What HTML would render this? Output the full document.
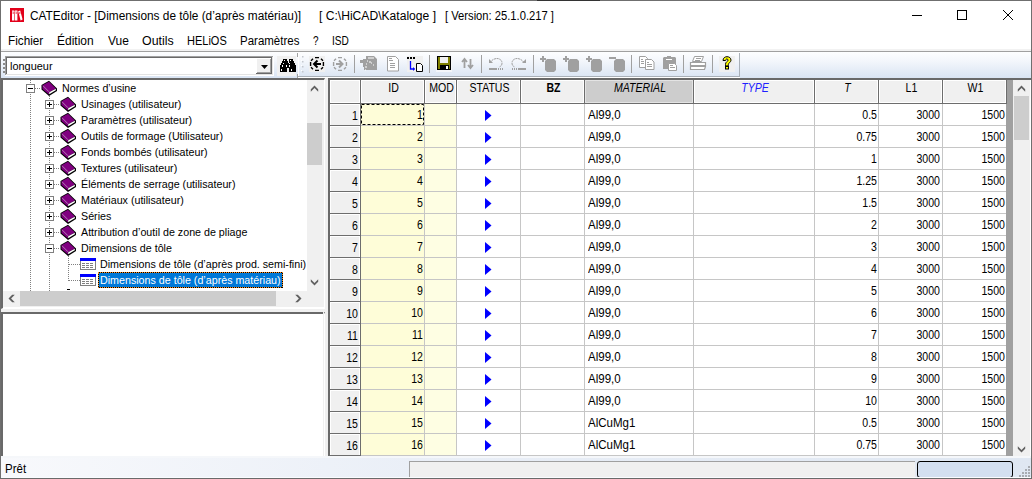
<!DOCTYPE html><html><head><meta charset='utf-8'><style>
*{margin:0;padding:0;box-sizing:border-box}
html,body{width:1032px;height:479px;overflow:hidden;background:#fff}
body{position:relative;font-family:"Liberation Sans",sans-serif;color:#000}
.ab{position:absolute}
.t{position:absolute;white-space:pre;line-height:1}
.g{font-size:12px;transform:scaleX(.88)}.gr{text-align:right;transform-origin:100% 50%}.gc{text-align:center}.gl{transform-origin:0 50%}
</style></head><body>
<div class='ab' style='left:0;top:0;width:1032px;height:479px;border:1px solid #6f6f6f;border-bottom:none'></div>
<svg class='ab' style='left:10px;top:8px' width='14' height='14'><rect width='14' height='14' fill='#e2001a'/><rect x='2' y='2.5' width='2.4' height='10' fill='#fff'/><rect x='5' y='2.5' width='2.4' height='10' fill='#fff'/><path d='M8.2 3.2L10.2 2.5L12.6 11.6L10.6 12.4Z' fill='#fff'/><rect x='2.6' y='4.4' width='1.2' height='1.2' fill='#e2001a'/><rect x='5.6' y='4.4' width='1.2' height='1.2' fill='#e2001a'/><rect x='9.2' y='4.4' width='1.2' height='1.2' fill='#e2001a'/><rect x='2' y='3.4' width='5.4' height='0.6' fill='#f7b0b8'/></svg>
<div class='t' style='left:30px;top:9.5px;font-size:12.5px;transform:scaleX(.948);transform-origin:0 0'>CATEditor - [Dimensions de tôle (d’après matériau)]</div>
<div class='t' style='left:319px;top:9.5px;font-size:12.5px;transform:scaleX(.968);transform-origin:0 0'>[ C:\HiCAD\Kataloge ]</div>
<div class='t' style='left:445px;top:9.5px;font-size:12.5px;transform:scaleX(.896);transform-origin:0 0'>[ Version: 25.1.0.217 ]</div>
<div class='ab' style='left:912px;top:15px;width:10px;height:1px;background:#000'></div>
<div class='ab' style='left:957px;top:10px;width:10px;height:10px;border:1px solid #000'></div>
<svg class='ab' style='left:1002px;top:9px' width='12' height='12'><path d='M1 1L11 11M11 1L1 11' stroke='#000' stroke-width='1'/></svg>
<div class='t' style='left:8px;top:34.5px;font-size:12.5px;transform:scaleX(0.94);transform-origin:0 0'>Fichier</div>
<div class='t' style='left:57px;top:34.5px;font-size:12.5px;transform:scaleX(0.96);transform-origin:0 0'>Édition</div>
<div class='t' style='left:107.5px;top:34.5px;font-size:12.5px;transform:scaleX(0.96);transform-origin:0 0'>Vue</div>
<div class='t' style='left:141.5px;top:34.5px;font-size:12.5px;transform:scaleX(0.99);transform-origin:0 0'>Outils</div>
<div class='t' style='left:186.5px;top:34.5px;font-size:12.5px;transform:scaleX(0.88);transform-origin:0 0'>HELiOS</div>
<div class='t' style='left:239.5px;top:34.5px;font-size:12.5px;transform:scaleX(0.92);transform-origin:0 0'>Paramètres</div>
<div class='t' style='left:312.5px;top:34.5px;font-size:12.5px;transform:scaleX(0.8);transform-origin:0 0'>?</div>
<div class='t' style='left:331.5px;top:34.5px;font-size:12.5px;transform:scaleX(0.81);transform-origin:0 0'>ISD</div>
<div class='ab' style='left:1px;top:49px;width:1030px;height:2px;background:#f2f2f2'></div>
<div class='ab' style='left:1px;top:51px;width:1030px;height:1px;background:#a0a0a0'></div>
<div class='ab' style='left:1px;top:52px;width:1030px;height:26px;background:linear-gradient(#fdfeff 0%,#f3f6fb 35%,#d9e4f3 100%)'></div>
<svg class='ab' style='left:0;top:0' width='1032' height='80'><rect x='297' y='53' width='1' height='4' fill='#a0a0a0'/><rect x='297' y='74' width='1' height='4' fill='#a0a0a0'/><rect x='298' y='76' width='441' height='1' fill='#a9b0b8'/><rect x='298' y='77' width='442' height='1' fill='#fff'/><rect x='739' y='53' width='1' height='24' fill='#a9b0b8'/><rect x='298' y='53' width='1' height='23' fill='#fff'/><rect x='302' y='56' width='1.5' height='1.5' fill='#c4c8ce'/><rect x='301' y='55' width='1' height='1' fill='#fff'/><rect x='302' y='61' width='1.5' height='1.5' fill='#c4c8ce'/><rect x='301' y='60' width='1' height='1' fill='#fff'/><rect x='302' y='66' width='1.5' height='1.5' fill='#c4c8ce'/><rect x='301' y='65' width='1' height='1' fill='#fff'/><rect x='302' y='71' width='1.5' height='1.5' fill='#c4c8ce'/><rect x='301' y='70' width='1' height='1' fill='#fff'/><rect x='3' y='59' width='2' height='2' fill='#8a8a8a'/><rect x='3' y='63' width='2' height='2' fill='#8a8a8a'/><rect x='3' y='67' width='2' height='2' fill='#8a8a8a'/><rect x='3' y='71' width='2' height='2' fill='#8a8a8a'/><rect x='5' y='56' width='269' height='20' fill='#fff'/><rect x='5' y='56' width='268' height='1' fill='#a0a0a0'/><rect x='5' y='56' width='1' height='19' fill='#a0a0a0'/><rect x='6' y='57' width='266' height='1' fill='#696969'/><rect x='6' y='57' width='1' height='17' fill='#696969'/><rect x='5' y='75' width='269' height='1' fill='#fff'/><rect x='273' y='56' width='1' height='20' fill='#fff'/><rect x='6' y='74' width='267' height='1' fill='#e3e3e3'/><rect x='272' y='57' width='1' height='18' fill='#e3e3e3'/><rect x='256' y='58' width='16' height='16' fill='#f0f0f0'/><rect x='256' y='73' width='16' height='1' fill='#696969'/><rect x='271' y='58' width='1' height='16' fill='#696969'/><rect x='257' y='72' width='14' height='1' fill='#a0a0a0'/><rect x='270' y='59' width='1' height='14' fill='#a0a0a0'/><rect x='256' y='58' width='15' height='1' fill='#fff'/><rect x='256' y='58' width='1' height='15' fill='#fff'/><path d='M261 65h7l-3.5 4z' fill='#000'/><rect x='277' y='56' width='19' height='20' fill='#f0f0f0'/><path d='M283 59h4v2h1v2h1v-4h4v2h1v2h1v2h1v7h-7v-4h-2v4h-7v-7h1v-2h1v-2h1z' fill='#000'/><rect x='284' y='60' width='1' height='1' fill='#fff'/><rect x='290' y='60' width='1' height='1' fill='#fff'/><rect x='283' y='63' width='1' height='1' fill='#fff'/><rect x='289' y='63' width='1' height='1' fill='#fff'/><rect x='282' y='65' width='1' height='2' fill='#fff'/><rect x='286' y='65' width='1' height='2' fill='#fff'/><rect x='289' y='65' width='1' height='2' fill='#fff'/><rect x='281' y='69' width='1' height='2' fill='#fff'/><rect x='291' y='69' width='1' height='2' fill='#fff'/><rect x='309' y='56' width='16' height='16' fill='#f0f0f0'/><path d='M315 57.6h4M315 70.4h4M310.6 62v4M323.4 62v4M311 60.8l2-2M321 58.8l2 2M311 67.2l2 2M321 69.2l2-2' fill='none' stroke='#000' stroke-width='1.4'/><path d='M314 64h7M317.5 60.5L314 64L317.5 67.5' fill='none' stroke='#000' stroke-width='2'/><path d='M338 57.6h4M338 70.4h4M333.6 62v4M346.4 62v4M334 60.8l2-2M344 58.8l2 2M334 67.2l2 2M344 69.2l2-2' fill='none' stroke='#a0a0a0' stroke-width='1.4'/><path d='M336 64h6.5M339 60.5L342.5 64L339 67.5' fill='none' stroke='#a0a0a0' stroke-width='2'/><rect x='354' y='55' width='1' height='18' fill='#a0a0a0'/><rect x='429' y='55' width='1' height='18' fill='#a0a0a0'/><rect x='481' y='55' width='1' height='18' fill='#a0a0a0'/><rect x='533' y='55' width='1' height='18' fill='#a0a0a0'/><rect x='631' y='55' width='1' height='18' fill='#a0a0a0'/><rect x='683' y='55' width='1' height='18' fill='#a0a0a0'/><rect x='712' y='55' width='1' height='18' fill='#a0a0a0'/><path d='M366 56h8l3 3v11h-13v-3h-1v-4h-3v-3h3v-1h3z' fill='#a0a0a0'/><path d='M368 58h6M367 61h1M369 62h2M371 63h1M366 64h1M373 65h1M365 67h2M365 70h1' stroke='#fff' stroke-width='1'/><path d='M387.5 56.5h8l3 3v11.5h-11z' fill='#fff' stroke='#a0a0a0' stroke-width='1'/><path d='M389 58.5h3M389 60.5h4M390 63.5h5M390 65.5h5M390 67.5h5' stroke='#a0a0a0' stroke-width='1'/><rect x='407' y='56' width='16' height='16' fill='#f0f0f0'/><rect x='407' y='57' width='2' height='2' fill='#000'/><rect x='410' y='57' width='2' height='2' fill='#000'/><rect x='413' y='57' width='2' height='2' fill='#000'/><path d='M410.5 61v8h4' fill='none' stroke='#0000ff' stroke-width='1.3'/><path d='M413 67l2 2l-2 2z' fill='#0000ff'/><path d='M416.5 63.5h4l2 2v6h-6z' fill='#fff' stroke='#000' stroke-width='1'/><rect x='436' y='56' width='16' height='16' fill='#f4f6f9'/><rect x='437' y='56' width='14' height='14' fill='#000'/><rect x='438' y='57' width='12' height='12' fill='#808000'/><rect x='440' y='57' width='8' height='6' fill='#f0f0f0'/><rect x='440' y='65' width='9' height='5' fill='#000'/><rect x='446' y='66' width='2' height='3' fill='#fff'/><path d='M464.5 68v-8M462 62l2.5-3l2.5 3' fill='none' stroke='#a0a0a0' stroke-width='1.8'/><path d='M470.5 59v8M468 65l2.5 3l2.5-3' fill='none' stroke='#a0a0a0' stroke-width='1.8'/><path d='M490 62.5c2-3 5-4 7-4c3 0 5 2 5 4.5c0 2-1 3.5-3 4' fill='none' stroke='#a0a0a0' stroke-width='1' stroke-dasharray='2 0.6'/><path d='M489 59v4h4z' fill='#a0a0a0'/><rect x='489' y='68' width='8' height='2' fill='#a0a0a0'/><path d='M498.5 68v2M500.5 68v2M502.5 68v2' stroke='#a0a0a0'/><path d='M524 62.5c-2-3-5-4-7-4c-3 0-5 2-5 4.5c0 2 1 3.5 3 4' fill='none' stroke='#a0a0a0' stroke-width='1' stroke-dasharray='2 0.6'/><path d='M526 59v4h-4z' fill='#a0a0a0'/><rect x='518' y='68' width='8' height='2' fill='#a0a0a0'/><path d='M512.5 68v2M514.5 68v2M516.5 68v2' stroke='#a0a0a0'/><path d='M547 59h7l2 2v9l-2 2h-7l-2-2v-9z' fill='#a0a0a0'/><rect x='540' y='58' width='6' height='2' fill='#a0a0a0'/><rect x='542' y='56' width='2' height='6' fill='#a0a0a0'/><path d='M570 59h7l2 2v9l-2 2h-7l-2-2v-9z' fill='#a0a0a0'/><rect x='563' y='58' width='6' height='2' fill='#a0a0a0'/><rect x='565' y='56' width='2' height='6' fill='#a0a0a0'/><path d='M593 59h7l2 2v9l-2 2h-7l-2-2v-9z' fill='#a0a0a0'/><rect x='586' y='58' width='6' height='2' fill='#a0a0a0'/><rect x='588' y='56' width='2' height='6' fill='#a0a0a0'/><path d='M616 59h7l2 2v9l-2 2h-7l-2-2v-9z' fill='#a0a0a0'/><rect x='609' y='57' width='7' height='2' fill='#a0a0a0'/><path d='M639.5 56.5h6l2 2v9h-8z' fill='#fff' stroke='#a0a0a0'/><path d='M645.5 59.5h6l2.5 2.5v7.5h-8.5z' fill='#fff' stroke='#a0a0a0'/><path d='M641 59.5h2M641 61.5h3M641 63.5h3M647 62.5h2M647 64.5h5M647 66.5h5' stroke='#a0a0a0'/><path d='M664 57h3v-1h4v1h4l1 1v11h-13v-11z' fill='#a0a0a0'/><rect x='666' y='59' width='6' height='1' fill='#fff'/><path d='M668.5 63.5h6l2 2v5h-8z' fill='#fff' stroke='#a0a0a0'/><path d='M670 65.5h3M670 67.5h5' stroke='#a0a0a0'/><path d='M694.5 56.5h9l-2 5h-9z' fill='#fff' stroke='#a0a0a0'/><path d='M690.5 62.5h15v4l-1 3h-14z' fill='#fff' stroke='#a0a0a0' stroke-width='1.2'/><rect x='691' y='65' width='14' height='2' fill='#a0a0a0'/><rect x='696' y='58' width='5' height='1' fill='#a0a0a0'/><rect x='695' y='60' width='5' height='1' fill='#a0a0a0'/><rect x='719' y='56' width='16' height='16' fill='#f0f0f0'/><path d='M723 60.5c0-2.5 2-3.8 4-3.8c2.2 0 4 1.3 4 3.5c0 2-2.5 2.5-2.7 4.5v1.2h-2.8v-1.5c0-2.8 2.6-3 2.6-4.2c0-.7-.5-1.2-1.2-1.2c-.8 0-1.2.6-1.2 1.5z' fill='#ffff00' stroke='#000' stroke-width='1'/><rect x='725.5' y='66.5' width='3' height='2.5' fill='#ffff00' stroke='#000' stroke-width='1'/></svg>
<div class='t' style='left:10px;top:61px;font-size:11.5px;transform:scaleX(.95);transform-origin:0 0'>longueur</div>
<div class='ab' style='left:1px;top:78px;width:324px;height:231px;background:#fff;border-top:2px solid #696969;border-left:2px solid #696969;border-right:1px solid #fff;border-bottom:1px solid #fff'></div>
<div class='ab' style='left:1px;top:309px;width:324px;height:3px;background:#f0f0f0'></div>
<div class='ab' style='left:1px;top:312px;width:324px;height:146px;background:#fff;border-top:2px solid #696969;border-left:2px solid #696969;border-right:1px solid #fff;border-bottom:1px solid #f4f4f4'></div>
<div class='ab' style='left:323px;top:312px;width:1px;height:145px;background:#f0f0f0'></div>
<div class='ab' style='left:3px;top:456px;width:321px;height:1px;background:#f0f0f0'></div>
<div class='ab' style='left:325px;top:78px;width:3px;height:380px;background:#f0f0f0'></div>
<svg class='ab' style='left:30px;top:80px' width='1' height='211'><line x1='0.5' y1='0' x2='0.5' y2='211' stroke='#808080' stroke-dasharray='1 1'/></svg>
<svg class='ab' style='left:49px;top:96px' width='1' height='195'><line x1='0.5' y1='0' x2='0.5' y2='195' stroke='#808080' stroke-dasharray='1 1'/></svg>
<svg class='ab' style='left:68px;top:256px' width='1' height='25'><line x1='0.5' y1='0' x2='0.5' y2='25' stroke='#808080' stroke-dasharray='1 1'/></svg>
<div class='ab' style='left:26px;top:84px;width:9px;height:9px;border:1px solid #808080;background:#fff'></div>
<div class='ab' style='left:28px;top:88px;width:5px;height:1px;background:#000'></div>
<svg class='ab' style='left:35px;top:88px' width='6' height='1'><line x1='0' y1='0.5' x2='6' y2='0.5' stroke='#808080' stroke-dasharray='1 1'/></svg>
<svg class='ab' style='left:41px;top:80px' width='17' height='17' viewBox='0 0 17 17'><path d='M0.5 5L8 0.8L16 8.5L16 11L8 16L0.5 9.5Z' fill='#000'/><path d='M1.5 5.3L8 1.8L14.8 8.6L8 12.3Z' fill='#800080'/><path d='M1.5 5.3L8 12.3L8 14.6L1.5 8.9Z' fill='#800080'/><path d='M8.2 12.3L14.8 8.8L14.8 10.3L8.2 14.3Z' fill='#fff'/><path d='M2 5.8L8 11.8' stroke='#e0b0e0' stroke-width='0.7'/></svg>
<div class='t' style='left:62px;top:83px;font-size:10.7px'>Normes d’usine</div>
<div class='ab' style='left:45px;top:100px;width:9px;height:9px;border:1px solid #808080;background:#fff'></div>
<div class='ab' style='left:47px;top:104px;width:5px;height:1px;background:#000'></div>
<div class='ab' style='left:49px;top:102px;width:1px;height:5px;background:#000'></div>
<svg class='ab' style='left:54px;top:104px' width='6' height='1'><line x1='0' y1='0.5' x2='6' y2='0.5' stroke='#808080' stroke-dasharray='1 1'/></svg>
<svg class='ab' style='left:60px;top:96px' width='17' height='17' viewBox='0 0 17 17'><path d='M0.5 5L8 0.8L16 8.5L16 11L8 16L0.5 9.5Z' fill='#000'/><path d='M1.5 5.3L8 1.8L14.8 8.6L8 12.3Z' fill='#800080'/><path d='M1.5 5.3L8 12.3L8 14.6L1.5 8.9Z' fill='#800080'/><path d='M8.2 12.3L14.8 8.8L14.8 10.3L8.2 14.3Z' fill='#fff'/><path d='M2 5.8L8 11.8' stroke='#e0b0e0' stroke-width='0.7'/></svg>
<div class='t' style='left:81px;top:99px;font-size:10.7px'>Usinages (utilisateur)</div>
<div class='ab' style='left:45px;top:116px;width:9px;height:9px;border:1px solid #808080;background:#fff'></div>
<div class='ab' style='left:47px;top:120px;width:5px;height:1px;background:#000'></div>
<div class='ab' style='left:49px;top:118px;width:1px;height:5px;background:#000'></div>
<svg class='ab' style='left:54px;top:120px' width='6' height='1'><line x1='0' y1='0.5' x2='6' y2='0.5' stroke='#808080' stroke-dasharray='1 1'/></svg>
<svg class='ab' style='left:60px;top:112px' width='17' height='17' viewBox='0 0 17 17'><path d='M0.5 5L8 0.8L16 8.5L16 11L8 16L0.5 9.5Z' fill='#000'/><path d='M1.5 5.3L8 1.8L14.8 8.6L8 12.3Z' fill='#800080'/><path d='M1.5 5.3L8 12.3L8 14.6L1.5 8.9Z' fill='#800080'/><path d='M8.2 12.3L14.8 8.8L14.8 10.3L8.2 14.3Z' fill='#fff'/><path d='M2 5.8L8 11.8' stroke='#e0b0e0' stroke-width='0.7'/></svg>
<div class='t' style='left:81px;top:115px;font-size:10.7px'>Paramètres (utilisateur)</div>
<div class='ab' style='left:45px;top:132px;width:9px;height:9px;border:1px solid #808080;background:#fff'></div>
<div class='ab' style='left:47px;top:136px;width:5px;height:1px;background:#000'></div>
<div class='ab' style='left:49px;top:134px;width:1px;height:5px;background:#000'></div>
<svg class='ab' style='left:54px;top:136px' width='6' height='1'><line x1='0' y1='0.5' x2='6' y2='0.5' stroke='#808080' stroke-dasharray='1 1'/></svg>
<svg class='ab' style='left:60px;top:128px' width='17' height='17' viewBox='0 0 17 17'><path d='M0.5 5L8 0.8L16 8.5L16 11L8 16L0.5 9.5Z' fill='#000'/><path d='M1.5 5.3L8 1.8L14.8 8.6L8 12.3Z' fill='#800080'/><path d='M1.5 5.3L8 12.3L8 14.6L1.5 8.9Z' fill='#800080'/><path d='M8.2 12.3L14.8 8.8L14.8 10.3L8.2 14.3Z' fill='#fff'/><path d='M2 5.8L8 11.8' stroke='#e0b0e0' stroke-width='0.7'/></svg>
<div class='t' style='left:81px;top:131px;font-size:10.7px'>Outils de formage (Utilisateur)</div>
<div class='ab' style='left:45px;top:148px;width:9px;height:9px;border:1px solid #808080;background:#fff'></div>
<div class='ab' style='left:47px;top:152px;width:5px;height:1px;background:#000'></div>
<div class='ab' style='left:49px;top:150px;width:1px;height:5px;background:#000'></div>
<svg class='ab' style='left:54px;top:152px' width='6' height='1'><line x1='0' y1='0.5' x2='6' y2='0.5' stroke='#808080' stroke-dasharray='1 1'/></svg>
<svg class='ab' style='left:60px;top:144px' width='17' height='17' viewBox='0 0 17 17'><path d='M0.5 5L8 0.8L16 8.5L16 11L8 16L0.5 9.5Z' fill='#000'/><path d='M1.5 5.3L8 1.8L14.8 8.6L8 12.3Z' fill='#800080'/><path d='M1.5 5.3L8 12.3L8 14.6L1.5 8.9Z' fill='#800080'/><path d='M8.2 12.3L14.8 8.8L14.8 10.3L8.2 14.3Z' fill='#fff'/><path d='M2 5.8L8 11.8' stroke='#e0b0e0' stroke-width='0.7'/></svg>
<div class='t' style='left:81px;top:147px;font-size:10.7px'>Fonds bombés (utilisateur)</div>
<div class='ab' style='left:45px;top:164px;width:9px;height:9px;border:1px solid #808080;background:#fff'></div>
<div class='ab' style='left:47px;top:168px;width:5px;height:1px;background:#000'></div>
<div class='ab' style='left:49px;top:166px;width:1px;height:5px;background:#000'></div>
<svg class='ab' style='left:54px;top:168px' width='6' height='1'><line x1='0' y1='0.5' x2='6' y2='0.5' stroke='#808080' stroke-dasharray='1 1'/></svg>
<svg class='ab' style='left:60px;top:160px' width='17' height='17' viewBox='0 0 17 17'><path d='M0.5 5L8 0.8L16 8.5L16 11L8 16L0.5 9.5Z' fill='#000'/><path d='M1.5 5.3L8 1.8L14.8 8.6L8 12.3Z' fill='#800080'/><path d='M1.5 5.3L8 12.3L8 14.6L1.5 8.9Z' fill='#800080'/><path d='M8.2 12.3L14.8 8.8L14.8 10.3L8.2 14.3Z' fill='#fff'/><path d='M2 5.8L8 11.8' stroke='#e0b0e0' stroke-width='0.7'/></svg>
<div class='t' style='left:81px;top:163px;font-size:10.7px'>Textures (utilisateur)</div>
<div class='ab' style='left:45px;top:180px;width:9px;height:9px;border:1px solid #808080;background:#fff'></div>
<div class='ab' style='left:47px;top:184px;width:5px;height:1px;background:#000'></div>
<div class='ab' style='left:49px;top:182px;width:1px;height:5px;background:#000'></div>
<svg class='ab' style='left:54px;top:184px' width='6' height='1'><line x1='0' y1='0.5' x2='6' y2='0.5' stroke='#808080' stroke-dasharray='1 1'/></svg>
<svg class='ab' style='left:60px;top:176px' width='17' height='17' viewBox='0 0 17 17'><path d='M0.5 5L8 0.8L16 8.5L16 11L8 16L0.5 9.5Z' fill='#000'/><path d='M1.5 5.3L8 1.8L14.8 8.6L8 12.3Z' fill='#800080'/><path d='M1.5 5.3L8 12.3L8 14.6L1.5 8.9Z' fill='#800080'/><path d='M8.2 12.3L14.8 8.8L14.8 10.3L8.2 14.3Z' fill='#fff'/><path d='M2 5.8L8 11.8' stroke='#e0b0e0' stroke-width='0.7'/></svg>
<div class='t' style='left:81px;top:179px;font-size:10.7px'>Éléments de serrage (utilisateur)</div>
<div class='ab' style='left:45px;top:196px;width:9px;height:9px;border:1px solid #808080;background:#fff'></div>
<div class='ab' style='left:47px;top:200px;width:5px;height:1px;background:#000'></div>
<div class='ab' style='left:49px;top:198px;width:1px;height:5px;background:#000'></div>
<svg class='ab' style='left:54px;top:200px' width='6' height='1'><line x1='0' y1='0.5' x2='6' y2='0.5' stroke='#808080' stroke-dasharray='1 1'/></svg>
<svg class='ab' style='left:60px;top:192px' width='17' height='17' viewBox='0 0 17 17'><path d='M0.5 5L8 0.8L16 8.5L16 11L8 16L0.5 9.5Z' fill='#000'/><path d='M1.5 5.3L8 1.8L14.8 8.6L8 12.3Z' fill='#800080'/><path d='M1.5 5.3L8 12.3L8 14.6L1.5 8.9Z' fill='#800080'/><path d='M8.2 12.3L14.8 8.8L14.8 10.3L8.2 14.3Z' fill='#fff'/><path d='M2 5.8L8 11.8' stroke='#e0b0e0' stroke-width='0.7'/></svg>
<div class='t' style='left:81px;top:195px;font-size:10.7px'>Matériaux (utilisateur)</div>
<div class='ab' style='left:45px;top:212px;width:9px;height:9px;border:1px solid #808080;background:#fff'></div>
<div class='ab' style='left:47px;top:216px;width:5px;height:1px;background:#000'></div>
<div class='ab' style='left:49px;top:214px;width:1px;height:5px;background:#000'></div>
<svg class='ab' style='left:54px;top:216px' width='6' height='1'><line x1='0' y1='0.5' x2='6' y2='0.5' stroke='#808080' stroke-dasharray='1 1'/></svg>
<svg class='ab' style='left:60px;top:208px' width='17' height='17' viewBox='0 0 17 17'><path d='M0.5 5L8 0.8L16 8.5L16 11L8 16L0.5 9.5Z' fill='#000'/><path d='M1.5 5.3L8 1.8L14.8 8.6L8 12.3Z' fill='#800080'/><path d='M1.5 5.3L8 12.3L8 14.6L1.5 8.9Z' fill='#800080'/><path d='M8.2 12.3L14.8 8.8L14.8 10.3L8.2 14.3Z' fill='#fff'/><path d='M2 5.8L8 11.8' stroke='#e0b0e0' stroke-width='0.7'/></svg>
<div class='t' style='left:81px;top:211px;font-size:10.7px'>Séries</div>
<div class='ab' style='left:45px;top:228px;width:9px;height:9px;border:1px solid #808080;background:#fff'></div>
<div class='ab' style='left:47px;top:232px;width:5px;height:1px;background:#000'></div>
<div class='ab' style='left:49px;top:230px;width:1px;height:5px;background:#000'></div>
<svg class='ab' style='left:54px;top:232px' width='6' height='1'><line x1='0' y1='0.5' x2='6' y2='0.5' stroke='#808080' stroke-dasharray='1 1'/></svg>
<svg class='ab' style='left:60px;top:224px' width='17' height='17' viewBox='0 0 17 17'><path d='M0.5 5L8 0.8L16 8.5L16 11L8 16L0.5 9.5Z' fill='#000'/><path d='M1.5 5.3L8 1.8L14.8 8.6L8 12.3Z' fill='#800080'/><path d='M1.5 5.3L8 12.3L8 14.6L1.5 8.9Z' fill='#800080'/><path d='M8.2 12.3L14.8 8.8L14.8 10.3L8.2 14.3Z' fill='#fff'/><path d='M2 5.8L8 11.8' stroke='#e0b0e0' stroke-width='0.7'/></svg>
<div class='t' style='left:81px;top:227px;font-size:10.7px'>Attribution d’outil de zone de pliage</div>
<div class='ab' style='left:45px;top:244px;width:9px;height:9px;border:1px solid #808080;background:#fff'></div>
<div class='ab' style='left:47px;top:248px;width:5px;height:1px;background:#000'></div>
<svg class='ab' style='left:54px;top:248px' width='6' height='1'><line x1='0' y1='0.5' x2='6' y2='0.5' stroke='#808080' stroke-dasharray='1 1'/></svg>
<svg class='ab' style='left:60px;top:240px' width='17' height='17' viewBox='0 0 17 17'><path d='M0.5 5L8 0.8L16 8.5L16 11L8 16L0.5 9.5Z' fill='#000'/><path d='M1.5 5.3L8 1.8L14.8 8.6L8 12.3Z' fill='#800080'/><path d='M1.5 5.3L8 12.3L8 14.6L1.5 8.9Z' fill='#800080'/><path d='M8.2 12.3L14.8 8.8L14.8 10.3L8.2 14.3Z' fill='#fff'/><path d='M2 5.8L8 11.8' stroke='#e0b0e0' stroke-width='0.7'/></svg>
<div class='t' style='left:81px;top:243px;font-size:10.7px'>Dimensions de tôle</div>
<div class='ab' style='left:67px;top:289px;width:3px;height:1px;background:#000'></div>
<svg class='ab' style='left:69px;top:264px' width='11' height='1'><line x1='0' y1='0.5' x2='11' y2='0.5' stroke='#808080' stroke-dasharray='1 1'/></svg>
<svg class='ab' style='left:80px;top:258px' width='16' height='12' viewBox='0 0 16 12'><rect x='0' y='0' width='16' height='12' fill='#808080'/><rect x='0' y='0' width='16' height='3' fill='#0000ff'/><rect x='1' y='3' width='14' height='8' fill='#fff'/><path d='M2 5.5h3M6 5.5h3M10 5.5h3M2 7.5h3M6 7.5h3M10 7.5h3M2 9.5h3M6 9.5h3M10 9.5h3' stroke='#808080' stroke-width='1'/></svg>
<div class='ab' style='left:98px;top:256px;width:209px;height:16px;overflow:hidden'><div class='t' style='left:2px;top:3px;font-size:10.7px'>Dimensions de tôle (d’après prod. semi-fini)</div></div>
<svg class='ab' style='left:69px;top:280px' width='11' height='1'><line x1='0' y1='0.5' x2='11' y2='0.5' stroke='#808080' stroke-dasharray='1 1'/></svg>
<svg class='ab' style='left:80px;top:274px' width='16' height='12' viewBox='0 0 16 12'><rect x='0' y='0' width='16' height='12' fill='#808080'/><rect x='0' y='0' width='16' height='3' fill='#0000ff'/><rect x='1' y='3' width='14' height='8' fill='#fff'/><path d='M2 5.5h3M6 5.5h3M10 5.5h3M2 7.5h3M6 7.5h3M10 7.5h3M2 9.5h3M6 9.5h3M10 9.5h3' stroke='#808080' stroke-width='1'/></svg>
<div class='ab' style='left:98px;top:272px;width:185px;height:16px;background:#0078d7'></div>
<svg class='ab' style='left:98px;top:272px' width='185' height='16' shape-rendering='crispEdges'><rect x='0.5' y='0.5' width='184' height='15' fill='none' stroke='#ff9020' stroke-width='1'/><rect x='0.5' y='0.5' width='184' height='15' fill='none' stroke='#000' stroke-width='1' stroke-dasharray='1 1'/></svg>
<div class='t' style='left:100px;top:275px;font-size:10.7px;color:#fff'>Dimensions de tôle (d’après matériau)</div>
<div class='ab' style='left:307px;top:80px;width:17px;height:211px;background:#f0f0f0'></div>
<div class='ab' style='left:307px;top:123px;width:15px;height:42px;background:#cdcdcd'></div>
<svg class='ab' style='left:310px;top:84px' width='9' height='9' viewBox='0 0 9 9'><path d='M0.8 5.2L4.5 1.5L8.2 5.2L8.2 7.8L4.5 4.1L0.8 7.8Z' fill='#606060'/></svg>
<svg class='ab' style='left:310px;top:278px' width='9' height='9' viewBox='0 0 9 9'><path d='M0.8 3.8L4.5 7.5L8.2 3.8L8.2 1.2L4.5 4.9L0.8 1.2Z' fill='#606060'/></svg>
<div class='ab' style='left:3px;top:291px;width:321px;height:16px;background:#f0f0f0'></div>
<div class='ab' style='left:20px;top:291px;width:256px;height:15px;background:#cdcdcd'></div>
<svg class='ab' style='left:7px;top:294px' width='9' height='9' viewBox='0 0 9 9'><path d='M5.2 0.8L1.5 4.5L5.2 8.2L7.8 8.2L4.1 4.5L7.8 0.8Z' fill='#606060'/></svg>
<svg class='ab' style='left:294px;top:294px' width='9' height='9' viewBox='0 0 9 9'><path d='M3.8 0.8L7.5 4.5L3.8 8.2L1.2 8.2L4.9 4.5L1.2 0.8Z' fill='#606060'/></svg>
<div class='ab' style='left:328px;top:78px;width:703px;height:380px;background:#fff;border-top:2px solid #696969;border-left:2px solid #696969'></div>
<div class='ab' style='left:330px;top:80px;width:677px;height:23px;background:#f0f0f0'></div>
<div class='ab' style='left:585px;top:80px;width:108px;height:23px;background:#cdcdcd'></div>
<div class='ab' style='left:361px;top:104px;width:63px;height:352px;background:#fefdd8'></div>
<div class='ab' style='left:425px;top:104px;width:31px;height:352px;background:#fefee3'></div>
<div class='ab' style='left:330px;top:104px;width:30px;height:352px;background:#f0f0f0'></div>
<div class='ab' style='left:361px;top:125px;width:645px;height:1px;background:#c6c6c6'></div>
<div class='ab' style='left:330px;top:125px;width:30px;height:1px;background:#6d6d6d'></div>
<div class='ab' style='left:361px;top:147px;width:645px;height:1px;background:#c6c6c6'></div>
<div class='ab' style='left:330px;top:147px;width:30px;height:1px;background:#6d6d6d'></div>
<div class='ab' style='left:361px;top:169px;width:645px;height:1px;background:#c6c6c6'></div>
<div class='ab' style='left:330px;top:169px;width:30px;height:1px;background:#6d6d6d'></div>
<div class='ab' style='left:361px;top:191px;width:645px;height:1px;background:#c6c6c6'></div>
<div class='ab' style='left:330px;top:191px;width:30px;height:1px;background:#6d6d6d'></div>
<div class='ab' style='left:361px;top:213px;width:645px;height:1px;background:#c6c6c6'></div>
<div class='ab' style='left:330px;top:213px;width:30px;height:1px;background:#6d6d6d'></div>
<div class='ab' style='left:361px;top:235px;width:645px;height:1px;background:#c6c6c6'></div>
<div class='ab' style='left:330px;top:235px;width:30px;height:1px;background:#6d6d6d'></div>
<div class='ab' style='left:361px;top:257px;width:645px;height:1px;background:#c6c6c6'></div>
<div class='ab' style='left:330px;top:257px;width:30px;height:1px;background:#6d6d6d'></div>
<div class='ab' style='left:361px;top:279px;width:645px;height:1px;background:#c6c6c6'></div>
<div class='ab' style='left:330px;top:279px;width:30px;height:1px;background:#6d6d6d'></div>
<div class='ab' style='left:361px;top:301px;width:645px;height:1px;background:#c6c6c6'></div>
<div class='ab' style='left:330px;top:301px;width:30px;height:1px;background:#6d6d6d'></div>
<div class='ab' style='left:361px;top:323px;width:645px;height:1px;background:#c6c6c6'></div>
<div class='ab' style='left:330px;top:323px;width:30px;height:1px;background:#6d6d6d'></div>
<div class='ab' style='left:361px;top:345px;width:645px;height:1px;background:#c6c6c6'></div>
<div class='ab' style='left:330px;top:345px;width:30px;height:1px;background:#6d6d6d'></div>
<div class='ab' style='left:361px;top:367px;width:645px;height:1px;background:#c6c6c6'></div>
<div class='ab' style='left:330px;top:367px;width:30px;height:1px;background:#6d6d6d'></div>
<div class='ab' style='left:361px;top:389px;width:645px;height:1px;background:#c6c6c6'></div>
<div class='ab' style='left:330px;top:389px;width:30px;height:1px;background:#6d6d6d'></div>
<div class='ab' style='left:361px;top:411px;width:645px;height:1px;background:#c6c6c6'></div>
<div class='ab' style='left:330px;top:411px;width:30px;height:1px;background:#6d6d6d'></div>
<div class='ab' style='left:361px;top:433px;width:645px;height:1px;background:#c6c6c6'></div>
<div class='ab' style='left:330px;top:433px;width:30px;height:1px;background:#6d6d6d'></div>
<div class='ab' style='left:361px;top:455px;width:645px;height:1px;background:#c6c6c6'></div>
<div class='ab' style='left:330px;top:455px;width:30px;height:1px;background:#6d6d6d'></div>
<div class='ab' style='left:424px;top:104px;width:1px;height:352px;background:#c6c6c6'></div>
<div class='ab' style='left:456px;top:104px;width:1px;height:352px;background:#c6c6c6'></div>
<div class='ab' style='left:520px;top:104px;width:1px;height:352px;background:#c6c6c6'></div>
<div class='ab' style='left:584px;top:104px;width:1px;height:352px;background:#c6c6c6'></div>
<div class='ab' style='left:693px;top:104px;width:1px;height:352px;background:#c6c6c6'></div>
<div class='ab' style='left:814px;top:104px;width:1px;height:352px;background:#c6c6c6'></div>
<div class='ab' style='left:878px;top:104px;width:1px;height:352px;background:#c6c6c6'></div>
<div class='ab' style='left:942px;top:104px;width:1px;height:352px;background:#c6c6c6'></div>
<div class='ab' style='left:1006px;top:104px;width:1px;height:352px;background:#c6c6c6'></div>
<div class='ab' style='left:360px;top:80px;width:1px;height:376px;background:#6d6d6d'></div>
<div class='ab' style='left:424px;top:80px;width:1px;height:23px;background:#6d6d6d'></div>
<div class='ab' style='left:456px;top:80px;width:1px;height:23px;background:#6d6d6d'></div>
<div class='ab' style='left:520px;top:80px;width:1px;height:23px;background:#6d6d6d'></div>
<div class='ab' style='left:584px;top:80px;width:1px;height:23px;background:#6d6d6d'></div>
<div class='ab' style='left:693px;top:80px;width:1px;height:23px;background:#6d6d6d'></div>
<div class='ab' style='left:814px;top:80px;width:1px;height:23px;background:#6d6d6d'></div>
<div class='ab' style='left:878px;top:80px;width:1px;height:23px;background:#6d6d6d'></div>
<div class='ab' style='left:942px;top:80px;width:1px;height:23px;background:#6d6d6d'></div>
<div class='ab' style='left:1006px;top:80px;width:1px;height:23px;background:#6d6d6d'></div>
<div class='ab' style='left:330px;top:103px;width:677px;height:1px;background:#6d6d6d'></div>
<div class='ab' style='left:330px;top:80px;width:30px;height:23px;border:1px solid #fff'></div>
<div class='ab' style='left:361px;top:80px;width:63px;height:23px;border:1px solid #fff'></div>
<div class='ab' style='left:425px;top:80px;width:31px;height:23px;border:1px solid #fff'></div>
<div class='ab' style='left:457px;top:80px;width:63px;height:23px;border:1px solid #fff'></div>
<div class='ab' style='left:521px;top:80px;width:63px;height:23px;border:1px solid #fff'></div>
<div class='ab' style='left:585px;top:80px;width:108px;height:23px;border:1px solid #e4e4e4'></div>
<div class='ab' style='left:694px;top:80px;width:120px;height:23px;border:1px solid #fff'></div>
<div class='ab' style='left:815px;top:80px;width:63px;height:23px;border:1px solid #fff'></div>
<div class='ab' style='left:879px;top:80px;width:63px;height:23px;border:1px solid #fff'></div>
<div class='ab' style='left:943px;top:80px;width:63px;height:23px;border:1px solid #fff'></div>
<div class='ab' style='left:330px;top:104px;width:30px;height:21px;border:1px solid #fff;border-bottom:none'></div>
<div class='ab' style='left:330px;top:126px;width:30px;height:21px;border:1px solid #fff;border-bottom:none'></div>
<div class='ab' style='left:330px;top:148px;width:30px;height:21px;border:1px solid #fff;border-bottom:none'></div>
<div class='ab' style='left:330px;top:170px;width:30px;height:21px;border:1px solid #fff;border-bottom:none'></div>
<div class='ab' style='left:330px;top:192px;width:30px;height:21px;border:1px solid #fff;border-bottom:none'></div>
<div class='ab' style='left:330px;top:214px;width:30px;height:21px;border:1px solid #fff;border-bottom:none'></div>
<div class='ab' style='left:330px;top:236px;width:30px;height:21px;border:1px solid #fff;border-bottom:none'></div>
<div class='ab' style='left:330px;top:258px;width:30px;height:21px;border:1px solid #fff;border-bottom:none'></div>
<div class='ab' style='left:330px;top:280px;width:30px;height:21px;border:1px solid #fff;border-bottom:none'></div>
<div class='ab' style='left:330px;top:302px;width:30px;height:21px;border:1px solid #fff;border-bottom:none'></div>
<div class='ab' style='left:330px;top:324px;width:30px;height:21px;border:1px solid #fff;border-bottom:none'></div>
<div class='ab' style='left:330px;top:346px;width:30px;height:21px;border:1px solid #fff;border-bottom:none'></div>
<div class='ab' style='left:330px;top:368px;width:30px;height:21px;border:1px solid #fff;border-bottom:none'></div>
<div class='ab' style='left:330px;top:390px;width:30px;height:21px;border:1px solid #fff;border-bottom:none'></div>
<div class='ab' style='left:330px;top:412px;width:30px;height:21px;border:1px solid #fff;border-bottom:none'></div>
<div class='ab' style='left:330px;top:434px;width:30px;height:21px;border:1px solid #fff;border-bottom:none'></div>
<div class='ab' style='left:1007px;top:80px;width:6px;height:376px;background:#a0a0a0'></div>
<div class='ab' style='left:1006px;top:104px;width:1px;height:352px;background:#a0a0a0'></div>
<div class='ab' style='left:1013px;top:80px;width:17px;height:376px;background:#f0f0f0'></div>
<div class='ab' style='left:1014px;top:96px;width:15px;height:44px;background:#cdcdcd'></div>
<svg class='ab' style='left:1017px;top:84px' width='9' height='9' viewBox='0 0 9 9'><path d='M0.8 5.2L4.5 1.5L8.2 5.2L8.2 7.8L4.5 4.1L0.8 7.8Z' fill='#606060'/></svg>
<svg class='ab' style='left:1017px;top:445px' width='9' height='9' viewBox='0 0 9 9'><path d='M0.8 3.8L4.5 7.5L8.2 3.8L8.2 1.2L4.5 4.9L0.8 1.2Z' fill='#606060'/></svg>
<div class='t g gc' style='left:362px;top:82px;width:63px;'>ID</div>
<div class='t g gc' style='left:426px;top:82px;width:31px;'>MOD</div>
<div class='t g gc' style='left:458px;top:82px;width:63px;'>STATUS</div>
<div class='t g gc' style='left:522px;top:82px;width:63px;font-weight:bold'>BZ</div>
<div class='t g gc' style='left:586px;top:82px;width:108px;font-style:italic'>MATERIAL</div>
<div class='t g gc' style='left:695px;top:82px;width:120px;font-style:italic;color:#2020ff'>TYPE</div>
<div class='t g gc' style='left:816px;top:82px;width:63px;font-style:italic'>T</div>
<div class='t g gc' style='left:880px;top:82px;width:63px;'>L1</div>
<div class='t g gc' style='left:944px;top:82px;width:63px;'>W1</div>
<div class='t g gr' style='left:330px;top:110px;width:28px'>1</div>
<div class='t g gr' style='left:361px;top:109px;width:62px'>1</div>
<svg class='ab' style='left:485px;top:110px' width='7' height='12'><path d='M0 0L6.5 5.5L0 11Z' fill='#0000ff'/></svg>
<div class='t g gl' style='left:588px;top:109px;transform:scaleX(.96)'>Al99,0</div>
<div class='t g gr' style='left:815px;top:109px;width:62px'>0.5</div>
<div class='t g gr' style='left:879px;top:109px;width:61px'>3000</div>
<div class='t g gr' style='left:943px;top:109px;width:62px'>1500</div>
<div class='t g gr' style='left:330px;top:132px;width:28px'>2</div>
<div class='t g gr' style='left:361px;top:131px;width:62px'>2</div>
<svg class='ab' style='left:485px;top:132px' width='7' height='12'><path d='M0 0L6.5 5.5L0 11Z' fill='#0000ff'/></svg>
<div class='t g gl' style='left:588px;top:131px;transform:scaleX(.96)'>Al99,0</div>
<div class='t g gr' style='left:815px;top:131px;width:62px'>0.75</div>
<div class='t g gr' style='left:879px;top:131px;width:61px'>3000</div>
<div class='t g gr' style='left:943px;top:131px;width:62px'>1500</div>
<div class='t g gr' style='left:330px;top:154px;width:28px'>3</div>
<div class='t g gr' style='left:361px;top:153px;width:62px'>3</div>
<svg class='ab' style='left:485px;top:154px' width='7' height='12'><path d='M0 0L6.5 5.5L0 11Z' fill='#0000ff'/></svg>
<div class='t g gl' style='left:588px;top:153px;transform:scaleX(.96)'>Al99,0</div>
<div class='t g gr' style='left:815px;top:153px;width:62px'>1</div>
<div class='t g gr' style='left:879px;top:153px;width:61px'>3000</div>
<div class='t g gr' style='left:943px;top:153px;width:62px'>1500</div>
<div class='t g gr' style='left:330px;top:176px;width:28px'>4</div>
<div class='t g gr' style='left:361px;top:175px;width:62px'>4</div>
<svg class='ab' style='left:485px;top:176px' width='7' height='12'><path d='M0 0L6.5 5.5L0 11Z' fill='#0000ff'/></svg>
<div class='t g gl' style='left:588px;top:175px;transform:scaleX(.96)'>Al99,0</div>
<div class='t g gr' style='left:815px;top:175px;width:62px'>1.25</div>
<div class='t g gr' style='left:879px;top:175px;width:61px'>3000</div>
<div class='t g gr' style='left:943px;top:175px;width:62px'>1500</div>
<div class='t g gr' style='left:330px;top:198px;width:28px'>5</div>
<div class='t g gr' style='left:361px;top:197px;width:62px'>5</div>
<svg class='ab' style='left:485px;top:198px' width='7' height='12'><path d='M0 0L6.5 5.5L0 11Z' fill='#0000ff'/></svg>
<div class='t g gl' style='left:588px;top:197px;transform:scaleX(.96)'>Al99,0</div>
<div class='t g gr' style='left:815px;top:197px;width:62px'>1.5</div>
<div class='t g gr' style='left:879px;top:197px;width:61px'>3000</div>
<div class='t g gr' style='left:943px;top:197px;width:62px'>1500</div>
<div class='t g gr' style='left:330px;top:220px;width:28px'>6</div>
<div class='t g gr' style='left:361px;top:219px;width:62px'>6</div>
<svg class='ab' style='left:485px;top:220px' width='7' height='12'><path d='M0 0L6.5 5.5L0 11Z' fill='#0000ff'/></svg>
<div class='t g gl' style='left:588px;top:219px;transform:scaleX(.96)'>Al99,0</div>
<div class='t g gr' style='left:815px;top:219px;width:62px'>2</div>
<div class='t g gr' style='left:879px;top:219px;width:61px'>3000</div>
<div class='t g gr' style='left:943px;top:219px;width:62px'>1500</div>
<div class='t g gr' style='left:330px;top:242px;width:28px'>7</div>
<div class='t g gr' style='left:361px;top:241px;width:62px'>7</div>
<svg class='ab' style='left:485px;top:242px' width='7' height='12'><path d='M0 0L6.5 5.5L0 11Z' fill='#0000ff'/></svg>
<div class='t g gl' style='left:588px;top:241px;transform:scaleX(.96)'>Al99,0</div>
<div class='t g gr' style='left:815px;top:241px;width:62px'>3</div>
<div class='t g gr' style='left:879px;top:241px;width:61px'>3000</div>
<div class='t g gr' style='left:943px;top:241px;width:62px'>1500</div>
<div class='t g gr' style='left:330px;top:264px;width:28px'>8</div>
<div class='t g gr' style='left:361px;top:263px;width:62px'>8</div>
<svg class='ab' style='left:485px;top:264px' width='7' height='12'><path d='M0 0L6.5 5.5L0 11Z' fill='#0000ff'/></svg>
<div class='t g gl' style='left:588px;top:263px;transform:scaleX(.96)'>Al99,0</div>
<div class='t g gr' style='left:815px;top:263px;width:62px'>4</div>
<div class='t g gr' style='left:879px;top:263px;width:61px'>3000</div>
<div class='t g gr' style='left:943px;top:263px;width:62px'>1500</div>
<div class='t g gr' style='left:330px;top:286px;width:28px'>9</div>
<div class='t g gr' style='left:361px;top:285px;width:62px'>9</div>
<svg class='ab' style='left:485px;top:286px' width='7' height='12'><path d='M0 0L6.5 5.5L0 11Z' fill='#0000ff'/></svg>
<div class='t g gl' style='left:588px;top:285px;transform:scaleX(.96)'>Al99,0</div>
<div class='t g gr' style='left:815px;top:285px;width:62px'>5</div>
<div class='t g gr' style='left:879px;top:285px;width:61px'>3000</div>
<div class='t g gr' style='left:943px;top:285px;width:62px'>1500</div>
<div class='t g gr' style='left:330px;top:308px;width:28px'>10</div>
<div class='t g gr' style='left:361px;top:307px;width:62px'>10</div>
<svg class='ab' style='left:485px;top:308px' width='7' height='12'><path d='M0 0L6.5 5.5L0 11Z' fill='#0000ff'/></svg>
<div class='t g gl' style='left:588px;top:307px;transform:scaleX(.96)'>Al99,0</div>
<div class='t g gr' style='left:815px;top:307px;width:62px'>6</div>
<div class='t g gr' style='left:879px;top:307px;width:61px'>3000</div>
<div class='t g gr' style='left:943px;top:307px;width:62px'>1500</div>
<div class='t g gr' style='left:330px;top:330px;width:28px'>11</div>
<div class='t g gr' style='left:361px;top:329px;width:62px'>11</div>
<svg class='ab' style='left:485px;top:330px' width='7' height='12'><path d='M0 0L6.5 5.5L0 11Z' fill='#0000ff'/></svg>
<div class='t g gl' style='left:588px;top:329px;transform:scaleX(.96)'>Al99,0</div>
<div class='t g gr' style='left:815px;top:329px;width:62px'>7</div>
<div class='t g gr' style='left:879px;top:329px;width:61px'>3000</div>
<div class='t g gr' style='left:943px;top:329px;width:62px'>1500</div>
<div class='t g gr' style='left:330px;top:352px;width:28px'>12</div>
<div class='t g gr' style='left:361px;top:351px;width:62px'>12</div>
<svg class='ab' style='left:485px;top:352px' width='7' height='12'><path d='M0 0L6.5 5.5L0 11Z' fill='#0000ff'/></svg>
<div class='t g gl' style='left:588px;top:351px;transform:scaleX(.96)'>Al99,0</div>
<div class='t g gr' style='left:815px;top:351px;width:62px'>8</div>
<div class='t g gr' style='left:879px;top:351px;width:61px'>3000</div>
<div class='t g gr' style='left:943px;top:351px;width:62px'>1500</div>
<div class='t g gr' style='left:330px;top:374px;width:28px'>13</div>
<div class='t g gr' style='left:361px;top:373px;width:62px'>13</div>
<svg class='ab' style='left:485px;top:374px' width='7' height='12'><path d='M0 0L6.5 5.5L0 11Z' fill='#0000ff'/></svg>
<div class='t g gl' style='left:588px;top:373px;transform:scaleX(.96)'>Al99,0</div>
<div class='t g gr' style='left:815px;top:373px;width:62px'>9</div>
<div class='t g gr' style='left:879px;top:373px;width:61px'>3000</div>
<div class='t g gr' style='left:943px;top:373px;width:62px'>1500</div>
<div class='t g gr' style='left:330px;top:396px;width:28px'>14</div>
<div class='t g gr' style='left:361px;top:395px;width:62px'>14</div>
<svg class='ab' style='left:485px;top:396px' width='7' height='12'><path d='M0 0L6.5 5.5L0 11Z' fill='#0000ff'/></svg>
<div class='t g gl' style='left:588px;top:395px;transform:scaleX(.96)'>Al99,0</div>
<div class='t g gr' style='left:815px;top:395px;width:62px'>10</div>
<div class='t g gr' style='left:879px;top:395px;width:61px'>3000</div>
<div class='t g gr' style='left:943px;top:395px;width:62px'>1500</div>
<div class='t g gr' style='left:330px;top:418px;width:28px'>15</div>
<div class='t g gr' style='left:361px;top:417px;width:62px'>15</div>
<svg class='ab' style='left:485px;top:418px' width='7' height='12'><path d='M0 0L6.5 5.5L0 11Z' fill='#0000ff'/></svg>
<div class='t g gl' style='left:588px;top:417px;transform:scaleX(.96)'>AlCuMg1</div>
<div class='t g gr' style='left:815px;top:417px;width:62px'>0.5</div>
<div class='t g gr' style='left:879px;top:417px;width:61px'>3000</div>
<div class='t g gr' style='left:943px;top:417px;width:62px'>1500</div>
<div class='t g gr' style='left:330px;top:440px;width:28px'>16</div>
<div class='t g gr' style='left:361px;top:439px;width:62px'>16</div>
<svg class='ab' style='left:485px;top:440px' width='7' height='12'><path d='M0 0L6.5 5.5L0 11Z' fill='#0000ff'/></svg>
<div class='t g gl' style='left:588px;top:439px;transform:scaleX(.96)'>AlCuMg1</div>
<div class='t g gr' style='left:815px;top:439px;width:62px'>0.75</div>
<div class='t g gr' style='left:879px;top:439px;width:61px'>3000</div>
<div class='t g gr' style='left:943px;top:439px;width:62px'>1500</div>
<svg class='ab' style='left:361px;top:104px' width='63' height='21'><rect x='0.5' y='0.5' width='62' height='20' fill='none' stroke='#000' stroke-dasharray='3 2'/></svg>
<div class='ab' style='left:1px;top:456px;width:1030px;height:2px;background:#f5f7fa'></div>
<div class='ab' style='left:1px;top:458px;width:1030px;height:20px;background:linear-gradient(90deg,#f8f9fc 0%,#eaeff7 40%,#dfe7f2 100%)'></div>
<div class='ab' style='left:409px;top:461px;width:506px;height:17px;background:#f0f0f0;border-top:1px solid #a0a0a0;border-left:1px solid #a0a0a0'></div>
<div class='ab' style='left:917px;top:461px;width:96px;height:17px;background:#d3dff0;border:1px solid #000;border-radius:3px'></div>
<svg class='ab' style='left:1018px;top:464px' width='13' height='14'><path d='M10 2h2v2h-2zM7 5h2v2h-2zM10 5h2v2h-2zM4 8h2v2h-2zM7 8h2v2h-2zM10 8h2v2h-2zM1 11h2v2h-2zM4 11h2v2h-2zM7 11h2v2h-2zM10 11h2v2h-2z' fill='#a8acb2'/></svg>
<div class='ab' style='left:1px;top:477px;width:1030px;height:1px;background:#fafcff'></div>
<div class='ab' style='left:0;top:478px;width:1032px;height:1px;background:#6a6a6a'></div>
<div class='ab' style='left:537px;top:0;width:63px;height:1px;background:#333'></div>
<div class='t' style='left:5px;top:462.5px;font-size:12.5px;transform:scaleX(.92);transform-origin:0 0'>Prêt</div>
</body></html>
